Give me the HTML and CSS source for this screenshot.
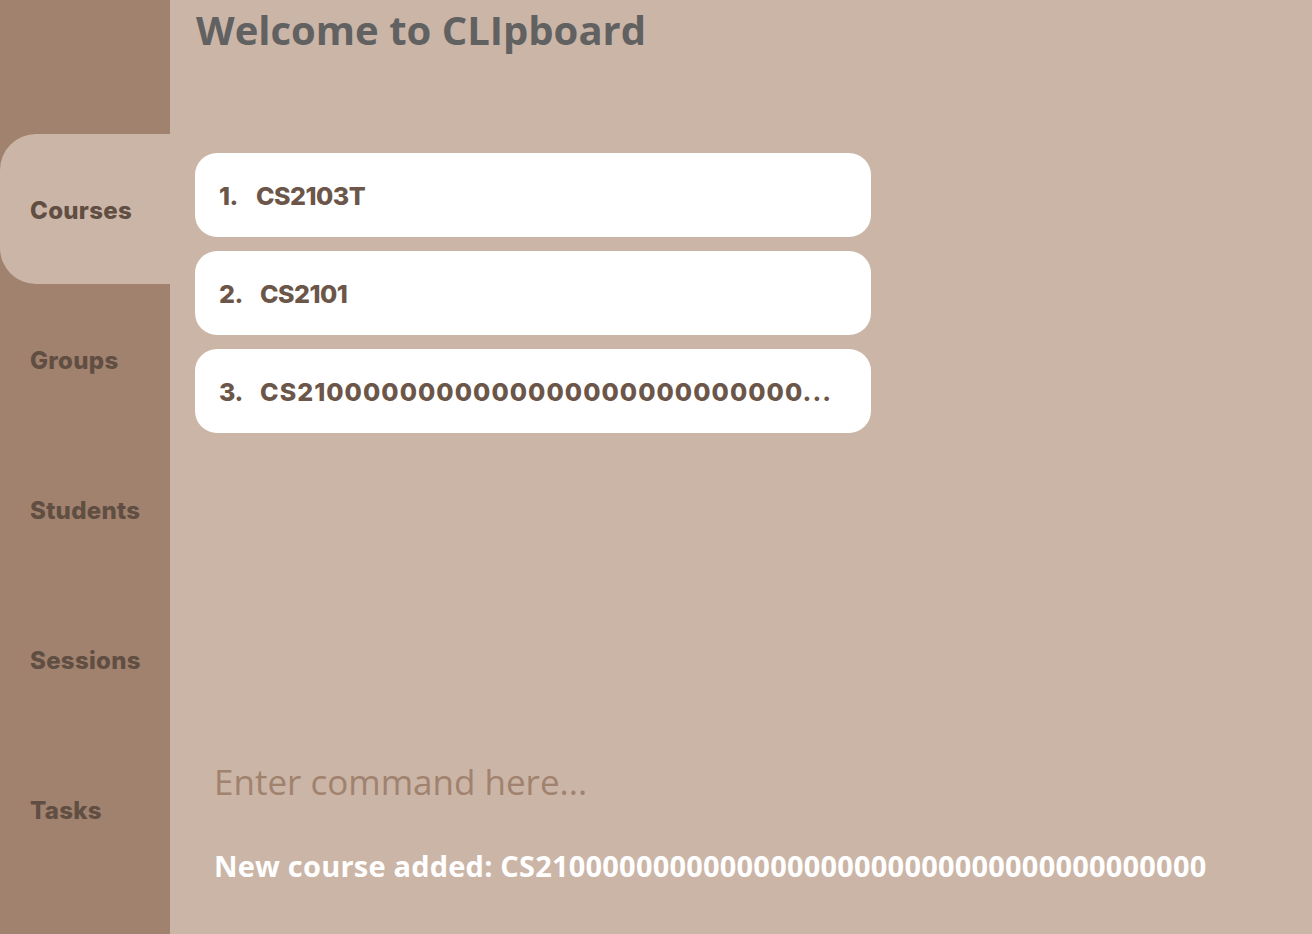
FILE: index.html
```html
<!DOCTYPE html>
<html>
<head>
<meta charset="utf-8">
<link rel="stylesheet" href="styles.css">
</head>
<body>
<div class="app">
  <nav class="sidebar">
    <div class="tab active">Courses</div>
    <div class="tab">Groups</div>
    <div class="tab">Students</div>
    <div class="tab">Sessions</div>
    <div class="tab">Tasks</div>
  </nav>
  <main class="main">
    <h1 class="title">Welcome to CLIpboard</h1>
    <div class="list">
      <div class="card"><span class="num">1.</span><span class="name">CS2103T</span></div>
      <div class="card"><span class="num">2.</span><span class="name">CS2101</span></div>
      <div class="card"><span class="num">3.</span><span class="name long">CS2100000000000000000000000000...</span></div>
    </div>
    <div class="spacer"></div>
    <div class="command">Enter command here...</div>
    <div class="result">New course added: CS2100000000000000000000000000000000000000</div>
  </main>
</div>
</body>
</html>
```

FILE: styles.css
```css
html, body {
  margin: 0;
  padding: 0;
  height: 100%;
}
body {
  background: #cbb5a7;
}
.app {
  display: flex;
  height: 934px;
  overflow: hidden;
}
.sidebar {
  width: 170px;
  flex: none;
  background: #a0826e;
  display: flex;
  flex-direction: column;
  padding-top: 134px;
  box-sizing: border-box;
}
.tab {
  height: 150px;
  display: flex;
  align-items: center;
  padding-left: 30px;
  padding-top: 2px;
  box-sizing: border-box;
  font-family: Inter, "DejaVu Sans", sans-serif;
  font-weight: 800;
  font-size: 24px;
  letter-spacing: 0.3px;
  color: #614e42;
}
.tab.active {
  background: #cbb5a7;
  border-radius: 36px 0 0 36px;
}
.main {
  flex: 1;
  display: flex;
  flex-direction: column;
  padding-left: 25px;
}
.title {
  margin: 4px 0 0 1px;
  font-family: "Open Sans", sans-serif;
  font-weight: 700;
  font-size: 40px;
  line-height: 52px;
  color: #616161;
  letter-spacing: 0;
}
.list {
  margin-top: 97px;
  display: flex;
  flex-direction: column;
  gap: 14px;
  width: 676px;
}
.card {
  height: 84px;
  background: #ffffff;
  border-radius: 22px;
  display: flex;
  align-items: center;
  padding-left: 24px;
  padding-top: 2px;
  box-sizing: border-box;
  font-family: Inter, "DejaVu Sans", sans-serif;
  font-weight: 800;
  font-size: 25px;
  letter-spacing: -0.5px;
  color: #6b5649;
}
.num {
  width: 37px;
  flex: none;
}
.card:nth-child(2) .num,
.card:nth-child(3) .num {
  width: 41px;
}
.name.long {
  letter-spacing: 1.05px;
}
.spacer {
  flex: 1;
}
.command {
  margin-left: 19px;
  font-family: "Open Sans", sans-serif;
  font-size: 35px;
  line-height: 44px;
  color: #a0826e;
  margin-bottom: 44px;
}
.result {
  margin-left: 19px;
  font-family: "Open Sans", sans-serif;
  font-weight: 700;
  font-size: 29px;
  line-height: 36px;
  letter-spacing: 0.2px;
  color: #ffffff;
  margin-bottom: 50px;
}
```
